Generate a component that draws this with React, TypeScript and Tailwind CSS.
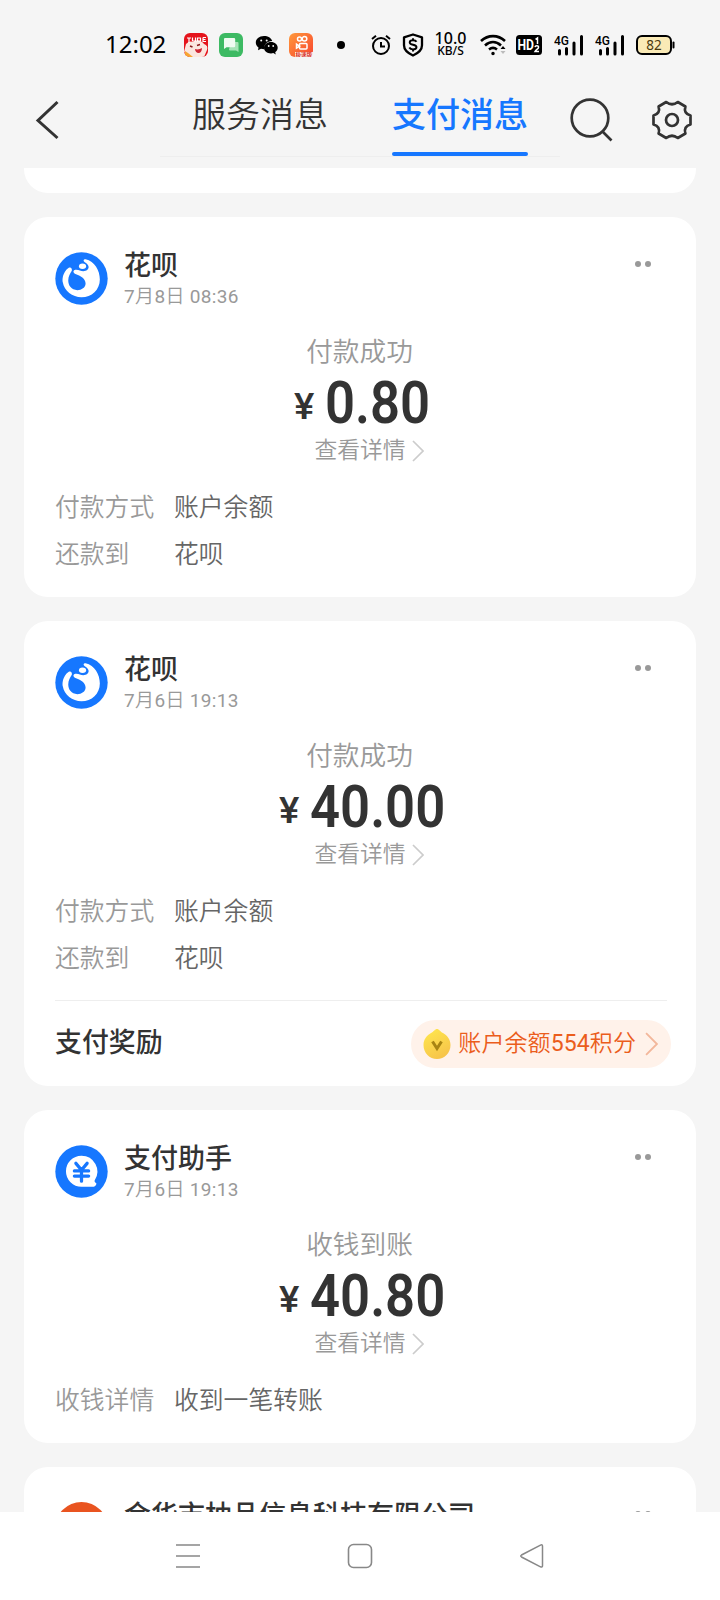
import React from "react";

const cjk = "font-['Roboto','Noto_Sans_CJK_SC',sans-serif]";

function StatusBar() {
  return (
    <div className="flex h-[88px] items-center pl-[105px] pt-px text-black">
      <div className="w-[79px] pb-[2px] font-['Noto_Sans',sans-serif] text-[24px] leading-[24px]">12:02</div>
      <svg className="mr-[11px] size-6 shrink-0" viewBox="0 0 24 24">
        <defs><clipPath id="round"><rect width="24" height="24" rx="6" /></clipPath></defs>
        <g clipPath="url(#round)">
          <rect width="24" height="24" fill="#e5141c" />
          <path d="M2 11c3-3 5-3 7-2 4-3 9-1 11 2 3 1 4 3 3 6l-3 7H6l-6-5z" fill="#fbe6df" />
          <path d="M3 5h4M5 5v5M8.500 4.500v3.500h3v-3.500M13.500 4.500v4M13.500 5h3v3h-3M19 4.500h3M19 4.500v4h3M19 6.500h2.500" stroke="#fff" strokeWidth="1.200" fill="none" />
          <path d="M6 13l2.500 1M13 12.500l3-1" stroke="#8a1c1c" strokeWidth="1.400" />
          <path d="M11 16c3 1 5 0 7-1 0 3-1.500 5-3.500 5S11 18 11 16z" fill="#cf2433" />
          <path d="M1 18l3 2 5 4H1z" fill="#f7a531" />
        </g>
      </svg>
      <svg className="mr-[12px] size-6 shrink-0" viewBox="0 0 24 24">
        <rect width="24" height="24" rx="6" fill="#3dba63" />
        <path d="M12 9h6.500a1 1 0 011 1v9l-2.500-1.600h-6a1 1 0 01-1-1z" fill="#a4e3b5" />
        <path d="M6 5h9a1.200 1.200 0 011.200 1.200V13A1.200 1.200 0 0115 14.200H7.500L5 16V6a1 1 0 011-1z" fill="#effbf1" />
      </svg>
      <svg className="mr-[10px] h-[20px] w-[24px] shrink-0" viewBox="0 0 24 20">
        <path d="M9 1C4 1 .8 4 .8 7.600c0 2 1 3.700 2.700 5L3 15.300l3-1.500c1 .3 2 .4 3 .4h.3C8.600 9.400 12 6 17.200 5.900 16.200 3 13 1 9 1z" />
        <path d="M16 7c-4 0-7 2.500-7 5.700s3 5.700 7 5.700c.8 0 1.600-.1 2.300-.3l2.500 1.300-.6-2.200c1.600-1.100 2.500-2.700 2.500-4.500C22.700 9.500 19.800 7 16 7z" />
        <g fill="#f5f5f5"><circle cx="6.200" cy="5.500" r="1" /><circle cx="11.700" cy="5.500" r="1" /><circle cx="13.700" cy="11" r=".9" /><circle cx="18.200" cy="11" r=".9" /></g>
      </svg>
      <svg className="mr-[24px] size-6 shrink-0" viewBox="0 0 24 24">
        <defs><linearGradient id="ks" x1="0" y1="0" x2="1" y2="1"><stop offset="0" stopColor="#ff9a3c" /><stop offset="1" stopColor="#f8442e" /></linearGradient></defs>
        <rect width="24" height="24" rx="6" fill="url(#ks)" />
        <g fill="none" stroke="#fff" strokeWidth="1.500"><circle cx="10.500" cy="6" r="2" /><circle cx="15.500" cy="5.800" r="2.300" /><rect x="10.500" y="10.500" width="7.500" height="5.500" rx="1" /><path d="M10.500 13.200l-3-2v4z" /></g>
        <path d="M6 19h18v1a4 4 0 01-4 4H6z" fill="#fbe9e4" />
        <text x="6.500" y="23.500" fontSize="5.500" fontWeight="700" fill="#d83427" fontFamily="Noto Sans CJK SC">极速版</text>
      </svg>
      <span className="mr-[26px] size-2 rounded-full bg-black" />
      <svg className="mr-[11px] h-[22px] w-[20px] shrink-0" viewBox="0 0 20 22" fill="none" stroke="#000" strokeWidth="2">
        <circle cx="10" cy="12" r="8" /><path d="M10 8V12.500h4" /><path d="M1 5l4-3.200M19 5l-4-3.200" />
      </svg>
      <svg className="mr-[11px] h-[24px] w-[22px] shrink-0" viewBox="0 0 22 24" fill="none" stroke="#000">
        <path d="M11 1.500L20 4.300v8c0 5-4 8-9 10.200C6 20.300 2 17.300 2 12.300v-8z" strokeWidth="2.300" strokeLinejoin="round" />
        <path d="M14.500 8.800C13.800 7.500 12.500 7.200 11 7.200c-2 0-3.300.9-3.300 2.200 0 3.100 6.800 1.500 6.800 4.600 0 1.500-1.500 2.400-3.500 2.400-1.700 0-3-.6-3.700-1.800M11 5.300V7M11 16.500v2" strokeWidth="1.900" />
      </svg>
      <div className="mr-[14px] flex w-[31px] flex-col items-center font-['Noto_Sans',sans-serif] font-medium">
        <span className="text-[16px] leading-[13px]">10.0</span>
        <span className="text-[12px] leading-[12px]">KB/S</span>
      </div>
      <svg className="mr-[9px] h-[22px] w-[27px] shrink-0" viewBox="0 0 27 22" fill="none" stroke="#000" strokeWidth="2.600">
        <path d="M1 7c7-6.500 17-6.500 24 0" /><path d="M5 11.500c5-4.500 11-4.500 16 0" /><path d="M9 15.500c2.500-2 5.500-2 8 0" /><circle cx="13" cy="19.500" r="1" fill="#000" strokeWidth="1.500" />
        <path d="M20.500 15l2.500-3 2.500 3z" fill="#000" stroke="none" /><path d="M20.500 17l2.500 3 2.500-3z" fill="#bbb" stroke="none" />
      </svg>
      <svg className="mr-[12px] h-[20px] w-[26px] shrink-0" viewBox="0 0 26 20">
        <rect width="26" height="20" rx="3.500" />
        <text x="1.500" y="15" fontSize="14" fill="#fff" fontFamily="Roboto" fontWeight="700" textLength="16.500" lengthAdjust="spacingAndGlyphs">HD</text>
        <path d="M19.500 4.300L21.500 3V9M19 12.200c.3-2 3.800-2 3.500.2 0 1.300-2.500 2.300-3.500 4.100h4" fill="none" stroke="#fff" strokeWidth="1.500" />
      </svg>
      {[0, 1].map((i) => (
        <svg key={i} className="mr-[11px] h-[22px] w-[30px] shrink-0" viewBox="0 0 30 22">
          <text x="0" y="11" fontSize="13" fontFamily="Roboto" fontWeight="500" textLength="15" lengthAdjust="spacingAndGlyphs">4G</text>
          <path d="M5.500 16.500V20M12.500 14.500V20M20 9V20M27.500 2.500V20" stroke="#000" strokeWidth="3" strokeLinecap="round" />
        </svg>
      ))}
      <svg className="h-[20px] w-[39px] shrink-0" viewBox="0 0 39 20">
        <rect x="1" y="1" width="34" height="18" rx="5" fill="#faeab6" stroke="#000" strokeWidth="2" />
        <path d="M37.500 7.500v5" stroke="#000" strokeWidth="2" strokeLinecap="round" />
        <text x="18" y="15" fontSize="13.500" textAnchor="middle" fontFamily="Noto Sans" fill="#4a3a10">82</text>
      </svg>
    </div>
  );
}

function Header() {
  return (
    <div className="flex h-20 items-start pl-[35px]">
      <svg className="mt-3 h-10 w-6" viewBox="0 0 24 40" fill="none" stroke="#333" strokeWidth="3"><path d="M22.500 2L3 20.500L22.500 38" /></svg>
      <div className="ml-[101px] flex h-[69px] w-[400px] border-b border-[#eee]">
        <div className="w-[232px] pl-[32px] text-[34px] font-[350] leading-[54px] text-[#333]">服务消息</div>
        <div className="flex h-[68px] w-[136px] flex-col justify-between text-[34px] font-medium leading-[54px] text-[#1677ff]">
          支付消息
          <span className="h-1 w-full rounded-full bg-[#1677ff]" />
        </div>
      </div>
      <svg className="ml-[8px] mt-[9px] size-[46px]" viewBox="0 0 46 46" fill="none" stroke="#333" strokeWidth="2.700"><circle cx="22" cy="21" r="18.300" /><path d="M34.500 34.500l9 9" /></svg>
      <svg className="ml-[36px] mt-[10px] size-11" viewBox="0 0 44 44" fill="none" stroke="#333" strokeWidth="2.700" strokeLinejoin="round">
        <circle cx="22" cy="22" r="6" />
        <path d="M40.500 17.500V26.500Q33.300 28.500 35.400 35.500L27.800 40Q22 35.500 16.200 40L8.600 35.500Q10.700 28.500 3.500 26.500V17.500Q10.700 15.500 8.600 8.500L16.200 4Q22 8.500 27.800 4L35.400 8.500Q33.300 15.500 40.500 17.500Z" />
      </svg>
    </div>
  );
}

function HuabeiIcon() {
  return (
    <svg className="-mt-[.5px] size-[53px] shrink-0" viewBox="0 0 52 52">
      <circle cx="26" cy="26" r="25.700" fill="#1677ff" />
      <path d="M13.500 15.500C7 20 7 28 7.700 30C9 38 17 44.500 26 44.500C36 44.500 44 37 44 27C44 18 39 9 30 7C27 7 28 9.500 30 10.500C34 13 34 17 30 18.500C26 20 24 17 20 17.500C17.500 18 17.500 20.500 20 21.500C25 23 30 26 30 31C30 35 26 37.500 22 37.500C16 37 13 33 13 28C13 24 15 21 16.500 18.500C17 16 15.500 14.500 13.500 15.500z" fill="#fff" />
      <ellipse cx="27" cy="14" rx="3.500" ry="2.600" fill="#fff" />
    </svg>
  );
}

function YenIcon() {
  return (
    <svg className="-mt-[.5px] size-[53px] shrink-0" viewBox="0 0 52 52">
      <circle cx="26" cy="26" r="25.700" fill="#1677ff" />
      <path d="M26 10.500a15.500 15.500 0 0113 24c-.5 1 0 2 1.500 3 .5 1-1 3.500-3.500 3.500H26a15.200 15.200 0 010-30.500z" fill="#fff" />
      <path d="M20.500 18l5.500 6.500 5.500-6.500M19 25.500h14M19 30.500h14M26 25v10.500" fill="none" stroke="#1677ff" strokeWidth="3.200" strokeLinecap="round" />
    </svg>
  );
}

function Chevron({ className }: { className: string }) {
  return <svg className={className} viewBox="0 0 12 22" fill="none" stroke="currentColor" strokeWidth="1.700"><path d="M1 1l10 10L1 21" /></svg>;
}

/** Light Chinese text whose digits keep the regular weight. */
function Mixed({ text }: { text: string }) {
  return (
    <>
      {text.split(/([\d:]+)/).map((part, i) => (i % 2 ? <span key={i} className="font-normal">{part}</span> : part))}
    </>
  );
}

function CardHead({ icon, name, date }: { icon: React.ReactNode; name: string; date: string }) {
  return (
    <div className="flex h-[52px]">
      {icon}
      <div className="ml-4 flex-1">
        <div className="-mt-[2px] h-8 whitespace-nowrap text-[27px] font-medium leading-8 text-[#333]">{name}</div>
        <div className="mt-[2px] text-[19px] leading-[26px] tracking-[.35px] font-[350] text-[#999]"><Mixed text={date} /></div>
      </div>
      <div className="mr-[13px] mt-[9px] flex gap-[4px]">
        <span className="size-[6px] rounded-full bg-[#999]" />
        <span className="size-[6px] rounded-full bg-[#999]" />
      </div>
    </div>
  );
}

interface CardProps {
  icon: React.ReactNode;
  name: string;
  date: string;
  title: string;
  amount: string;
  amountWidth: string;
  rows: [string, string][];
  children?: React.ReactNode;
}

function Card({ icon, name, date, title, amount, amountWidth, rows, children }: CardProps) {
  return (
    <section className="shrink-0 rounded-3xl bg-white pl-[31px] pr-8 pt-[35px]">
      <CardHead icon={icon} name={name} date={date} />
      <div className="mt-[28px] text-center text-[26.700px] font-[350] leading-[40px] text-[#999]">{title}</div>
      <div className="mt-px flex h-[60px] items-center justify-center pl-[5px] text-[#333]">
        <span className="mr-[10px] mt-[7px] w-[21px] origin-left scale-x-105 text-[36.500px] font-medium leading-[60px]">¥</span>
        <span className={`${amountWidth} whitespace-nowrap text-[58.500px] font-semibold leading-[60px]`}>
          <span className="inline-block origin-left scale-x-[.9]">{amount}</span>
        </span>
      </div>
      <div className="flex h-9 items-center justify-center pl-[19px] text-[22.800px] font-[350] leading-9 text-[#999]">
        查看详情
        <Chevron className="ml-[6px] h-[22px] w-3 text-[#ccc]" />
      </div>
      <div className="mt-[15px] pb-[19px] text-[24.800px] font-[350] leading-[47px]">
        {rows.map(([k, v]) => (
          <div key={k} className="flex">
            <span className="w-[119px] text-[#999]">{k}</span>
            <span className="text-[#666]">{v}</span>
          </div>
        ))}
      </div>
      {children}
    </section>
  );
}

function Reward() {
  return (
    <div className="-mr-[7px]">
      <div className="-mt-px mr-[4px] border-t border-[#eee]" />
      <div className="flex h-[85px] items-center justify-between">
        <span className="text-[26.900px] font-medium text-[#333]">支付奖励</span>
        <div className="flex h-12 items-center rounded-full bg-[#fff2ea] pl-3 pr-[13px] text-[23px] font-[350] text-[#eb5d1c]">
          <svg className="mr-[7px] h-8 w-7" viewBox="0 0 28 32">
            <defs><linearGradient id="coin" x1="0" y1="0" x2=".5" y2="1"><stop offset="0" stopColor="#ffe94e" /><stop offset="1" stopColor="#f7c54a" /></linearGradient></defs>
            <path d="M14 1c2 0 3 2.500 6 4 4 2.500 7.500 6 7.500 12 0 8-6 14-13.500 14S.5 25 .5 17C.5 11 4 7.500 8 5c3-1.500 4-4 6-4z" fill="url(#coin)" />
            <path d="M9.500 13.500l4.500 7 4.500-7" fill="none" stroke="#a88413" strokeWidth="3" />
          </svg>
          <span className="pt-[2px] tracking-[.1px]"><Mixed text="账户余额554积分" /></span>
          <Chevron className="ml-[9px] h-6 w-[13px] text-[#f3b79b]" />
        </div>
      </div>
    </div>
  );
}

export default function App() {
  return (
    <div className={`flex h-[1600px] w-[720px] flex-col overflow-hidden bg-[#f5f5f5] ${cjk}`}>
      <StatusBar />
      <Header />
      <main className="flex h-[1344px] flex-col gap-6 overflow-hidden px-6">
        <div className="h-[25px] shrink-0 rounded-b-3xl bg-white" />
        <Card icon={<HuabeiIcon />} name="花呗" date="7月8日 08:36" title="付款成功" amount="0.80" amountWidth="w-[105px]" rows={[["付款方式", "账户余额"], ["还款到", "花呗"]]} />
        <Card icon={<HuabeiIcon />} name="花呗" date="7月6日 19:13" title="付款成功" amount="40.00" amountWidth="w-[135px]" rows={[["付款方式", "账户余额"], ["还款到", "花呗"]]}>
          <Reward />
        </Card>
        <Card icon={<YenIcon />} name="支付助手" date="7月6日 19:13" title="收钱到账" amount="40.80" amountWidth="w-[135px]" rows={[["收钱详情", "收到一笔转账"]]} />
        <section className="h-[200px] shrink-0 rounded-3xl bg-white pl-[31px] pr-8 pt-[35px]">
          <CardHead icon={<span className="size-[53px] shrink-0 rounded-full bg-[#e95420]" />} name="金华市柚品信息科技有限公司" date="7月6日 19:13" />
        </section>
      </main>
      <nav className="flex h-[88px] items-center justify-center gap-[146px] bg-white">
        <svg className="h-7 w-[26px]" viewBox="0 0 26 28" stroke="#888" strokeWidth="1.700"><path d="M1 3h24M1 14h24M1 25h24" /></svg>
        <svg className="h-7 w-[26px]" viewBox="0 0 26 28" fill="none" stroke="#888" strokeWidth="1.600"><rect x="1.500" y="2.500" width="23" height="23" rx="5" /></svg>
        <svg className="h-7 w-[26px]" viewBox="0 0 26 28" fill="none" stroke="#888" strokeWidth="1.500"><path d="M21.500 3.200L2.500 13q-1.500 1 0 2L21.500 24.800q2 .8 2-1V4.200q0-2-2-1z" /></svg>
      </nav>
    </div>
  );
}
